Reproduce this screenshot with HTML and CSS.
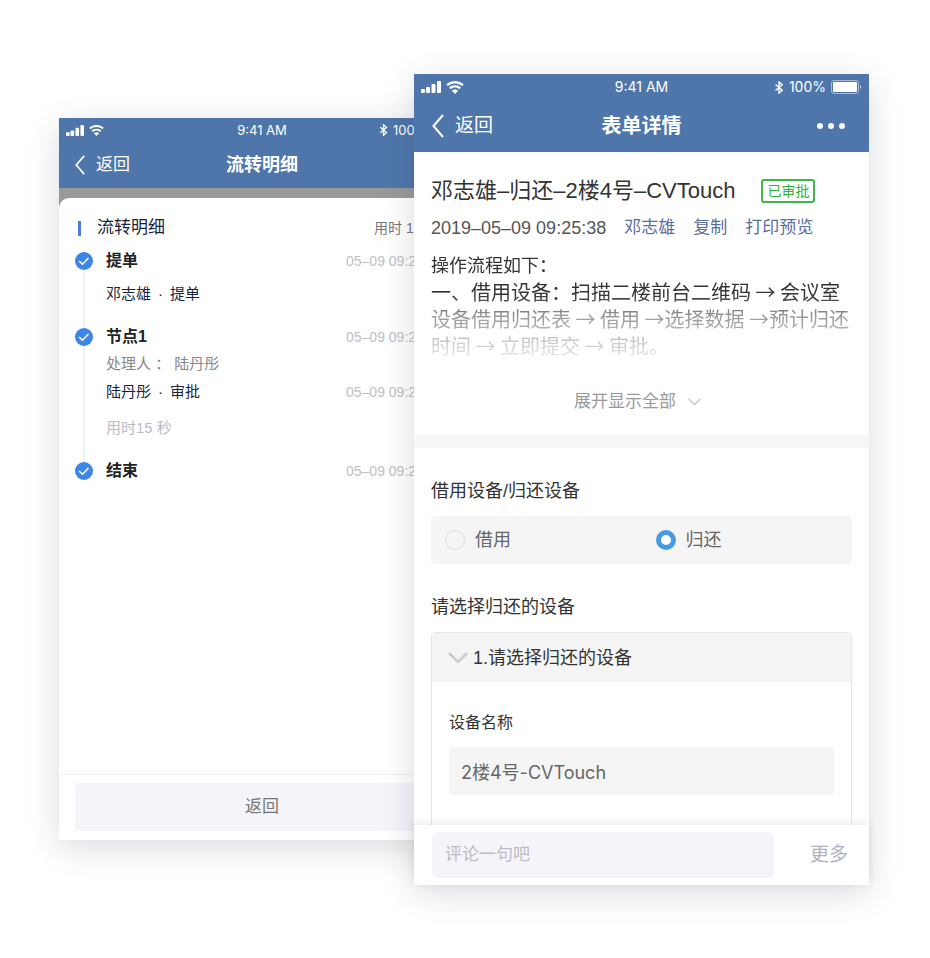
FILE: index.html
```html
<!DOCTYPE html>
<html lang="zh-CN">
<head>
  <meta charset="UTF-8" />
  <meta name="viewport" content="width=device-width, initial-scale=1.0"/>
  <title>表单详情</title>
  <link rel="stylesheet" href="styles.css">
</head>
<body>
  <!-- shared icons -->
  <svg class="sprite" width="0" height="0" aria-hidden="true">
    <symbol id="icon-signal" viewBox="0 0 20 12">
      <rect x="0" y="8" width="4" height="4" rx="1"/>
      <rect x="5" y="6" width="4" height="6" rx="1"/>
      <rect x="10.500" y="3" width="4" height="9" rx="1"/>
      <rect x="16" y="0" width="4" height="12" rx="1"/>
    </symbol>
    <symbol id="icon-wifi" viewBox="0 0 16 12">
      <path d="M8 0C4.900 0 2.100 1.200 0 3.100l1.500 1.600C3.200 3.100 5.500 2.200 8 2.200s4.800.9 6.500 2.500L16 3.100C13.900 1.200 11.100 0 8 0z"/>
      <path d="M8 4C5.900 4 4 4.800 2.600 6.100l1.500 1.600C5.100 6.700 6.500 6.100 8 6.100s2.900.6 3.900 1.600l1.500-1.600C12 4.800 10.100 4 8 4z"/>
      <path d="M8 7.900c-1.100 0-2.100.4-2.800 1.100L8 12l2.800-3c-.7-.7-1.700-1.100-2.800-1.100z"/>
    </symbol>
    <symbol id="icon-bluetooth" viewBox="0 0 8 12">
      <path d="M.8 3.300L7 8.500 4 11.200V.8l3 2.700L.8 8.700" fill="none" stroke="currentColor" stroke-width="1.300"/>
    </symbol>
    <symbol id="icon-battery" viewBox="0 0 31 14">
      <rect x=".5" y=".5" width="27" height="13" rx="2.500" fill="none" stroke="currentColor" opacity=".5"/>
      <rect x="2" y="2" width="24" height="10" rx="1"/>
      <path d="M29 5c1.500.3 1.500 3.700 0 4z" opacity=".6"/>
    </symbol>
    <symbol id="icon-back" viewBox="0 0 12 24">
      <path d="M11 1L1.500 12 11 23" fill="none" stroke="currentColor" stroke-width="2"/>
    </symbol>
    <symbol id="icon-check" viewBox="0 0 18 18">
      <circle cx="9" cy="9" r="9" fill="#3d85e8"/>
      <path d="M4 9l3.500 3.200L13.500 6" fill="none" stroke="#fff" stroke-width="1.600"/>
    </symbol>
    <symbol id="icon-down" viewBox="0 0 20 12">
      <path d="M1 1l9 9 9-9" fill="none" stroke="currentColor" stroke-width="2.500"/>
    </symbol>
  </svg>

  <div class="stage">
    <!-- flow detail -->
    <section class="phone phone-flow">
      <header class="top">
        <div class="status">
          <span class="status-left">
            <svg class="signal"><use href="#icon-signal"/></svg>
            <svg class="wifi"><use href="#icon-wifi"/></svg>
          </span>
          <span>9:41 AM</span>
          <span class="status-right">
            <svg class="bluetooth"><use href="#icon-bluetooth"/></svg>
            <span class="level">100</span>
          </span>
        </div>
        <nav class="nav">
          <button class="back"><svg><use href="#icon-back"/></svg>返回</button>
          <h1>流转明细</h1>
        </nav>
      </header>

      <div class="mask">
        <div class="sheet">
          <div class="sheet-head">
            <h2>流转明细</h2>
            <span class="total">用时 1</span>
          </div>
          <ol class="timeline">
            <li>
              <div class="rail"><svg><use href="#icon-check"/></svg></div>
              <div class="step">
                <div class="row step-head"><h3>提单</h3><time>05–09 09:2</time></div>
                <div class="row first"><span>邓志雄<i>·</i>提单</span></div>
              </div>
            </li>
            <li>
              <div class="rail"><svg><use href="#icon-check"/></svg></div>
              <div class="step">
                <div class="row step-head"><h3>节点1</h3><time>05–09 09:2</time></div>
                <div class="row handler">处理人 ： 陆丹彤</div>
                <div class="row"><span>陆丹彤<i>·</i>审批</span><time>05–09 09:2</time></div>
                <div class="row cost">用时15 秒</div>
              </div>
            </li>
            <li>
              <div class="rail"><svg><use href="#icon-check"/></svg></div>
              <div class="step">
                <div class="row step-head"><h3>结束</h3><time>05–09 09:2</time></div>
              </div>
            </li>
          </ol>
          <footer class="sheet-foot">
            <button>返回</button>
          </footer>
        </div>
      </div>
    </section>

    <!-- form detail -->
    <section class="phone phone-form">
      <header class="top">
        <div class="status">
          <span class="status-left">
            <svg class="signal"><use href="#icon-signal"/></svg>
            <svg class="wifi"><use href="#icon-wifi"/></svg>
          </span>
          <span>9:41 AM</span>
          <span class="status-right">
            <svg class="bluetooth"><use href="#icon-bluetooth"/></svg>
            100%
            <svg class="battery"><use href="#icon-battery"/></svg>
          </span>
        </div>
        <nav class="nav">
          <button class="back"><svg><use href="#icon-back"/></svg>返回</button>
          <h1>表单详情</h1>
          <button class="menu" aria-label="菜单">
            <svg width="28" height="8" viewBox="0 0 28 8">
              <circle cx="3" cy="4" r="3"/><circle cx="14" cy="4" r="3"/><circle cx="25" cy="4" r="3"/>
            </svg>
          </button>
        </nav>
      </header>

      <div class="intro">
        <div class="title">
          <h2>邓志雄–归还–2楼4号–CVTouch</h2>
          <span class="tag">已审批</span>
        </div>
        <div class="meta">
          <time>2019–05–09 09:25:38</time>
          <a href="#">邓志雄</a>
          <a href="#">复制</a>
          <a href="#">打印预览</a>
        </div>
        <div class="desc">
          <p class="lead">操作流程如下：</p>
          <p>一、借用设备：扫描二楼前台二维码 → 会议室设备借用归还表 → 借用 →选择数据 →预计归还时间 → 立即提交 → 审批。</p>
        </div>
        <button class="expand">展开显示全部<svg><use href="#icon-down"/></svg></button>
      </div>

      <form class="form">
        <fieldset>
          <legend>借用设备/归还设备</legend>
          <div class="radios">
            <label><input type="radio" name="action">借用</label>
            <label><input type="radio" name="action" checked>归还</label>
          </div>
        </fieldset>
        <h3>请选择归还的设备</h3>
        <div class="card">
          <div class="card-head"><svg><use href="#icon-down"/></svg>1.请选择归还的设备</div>
          <div class="card-body">
            <label for="device">设备名称</label>
            <input id="device" type="text" value="2楼4号-CVTouch">
          </div>
        </div>
      </form>

      <footer class="comment">
        <input type="text" placeholder="评论一句吧" aria-label="评论">
        <button>更多</button>
      </footer>
    </section>
  </div>
</body>
</html>
```
FILE: styles.css
```css
* { box-sizing: border-box; }

body {
  margin: 0;
  background: #fff;
  color: #333;
  font-family: 'Liberation Sans', 'Noto Sans CJK SC', sans-serif;
  line-height: 24px;
}

h1, h2, h3, p, ol, fieldset, legend {
  margin: 0;
  padding: 0;
  border: none;
  font-weight: normal;
}

button, input {
  font-family: inherit;
  line-height: inherit;
  border: none;
  outline: none;
}

button {
  padding: 0;
  background: none;
  cursor: pointer;
}

a { text-decoration: none; }

svg {
  fill: currentColor;
  flex: none;
}

.sprite { position: absolute; }

.stage {
  display: flex;
  align-items: flex-start;
  padding: 74px 61px 74px 59px;
}

.phone {
  display: flex;
  flex-direction: column;
  min-width: 0;
  background: #fff;
  box-shadow: 0 8px 32px rgba(40, 40, 60, 0.16);
}

.phone-flow {
  flex: 406 1 0;
  min-height: 722px;
  margin-top: 44px;
}

.phone-form {
  flex: 455 1 0;
  margin-left: -51px;
  z-index: 1;
}

/* top bar */
.top {
  background: #4f76aa;
  color: #fff;
}

.status {
  display: grid;
  grid-template-columns: 1fr auto 1fr;
  align-items: center;
  height: 26px;
  padding: 0 7px;
  font-family: Inter, sans-serif;
  font-size: 14px;
}

.status-left, .status-right {
  display: flex;
  align-items: center;
  gap: 5px;
}

.status-right { justify-content: flex-end; }

.signal { width: 20px; height: 12px; }
.wifi { width: 18px; height: 13px; }
.bluetooth { width: 10px; height: 13px; }
.battery { width: 31px; height: 14px; }

.nav {
  display: grid;
  grid-template-columns: 1fr auto 1fr;
  align-items: center;
  height: 52px;
  padding: 0 18px;
}

.nav h1 {
  font-size: 20px;
  font-weight: bold;
}

.back {
  display: flex;
  align-items: center;
  gap: 11px;
  color: #fff;
  font-size: 19px;
}

.back svg { width: 12px; height: 24px; }

.menu {
  justify-self: end;
  margin-right: 6px;
  color: #fff;
}

.menu svg { display: block; }

.phone-flow .status {
  height: 23px;
  font-size: 13px;
}

.phone-flow .signal { width: 18px; height: 11px; }
.phone-flow .wifi { width: 15px; height: 11px; }
.phone-flow .bluetooth { width: 9px; height: 12px; }
.phone-flow .level { width: 65px; }

.phone-flow .nav {
  height: 47px;
  padding: 0 16px;
}

.phone-flow .nav h1 { font-size: 18px; }
.phone-flow .back { font-size: 17px; }
.phone-flow .back svg { width: 10px; height: 20px; }

/* flow sheet */
.mask {
  flex: 1;
  display: flex;
  padding-top: 10px;
  background: linear-gradient(#999 40px, #fff 40px);
}

.sheet {
  flex: 1;
  display: flex;
  flex-direction: column;
  background: #fff;
  border-radius: 10px 10px 0 0;
}

.sheet-head {
  display: flex;
  align-items: center;
  justify-content: space-between;
  padding: 18px 16px 0 19px;
  color: #777;
}

.sheet-head h2 {
  display: flex;
  align-items: center;
  gap: 16px;
  color: #1b1f3b;
  font-size: 17px;
}

.sheet-head h2::before {
  content: '';
  width: 3px;
  height: 15px;
  background: #4a7be0;
}

.total {
  width: 75px;
  font-size: 14px;
}

.timeline {
  flex: 1;
  padding: 12px 16px 0;
  list-style: none;
}

.timeline li {
  display: flex;
  gap: 13px;
}

.rail {
  display: flex;
  flex-direction: column;
  align-items: center;
}

.rail svg { width: 18px; height: 18px; }

.rail::after {
  content: '';
  flex: 1;
  width: 2px;
  background: #edf1fd;
}

.timeline li:last-child .rail::after { display: none; }

.step {
  flex: 1;
  padding-bottom: 20px;
}

.row {
  display: flex;
  align-items: center;
  justify-content: space-between;
  height: 28px;
  color: #1b1f3b;
  font-size: 15px;
}

.row i {
  margin: 0 7px;
  font-style: normal;
}

.row time {
  width: 103px;
  color: #c0c0c5;
  font-size: 14px;
}

.step-head {
  height: 18px;
  margin-bottom: 4px;
}

.step h3 {
  color: #222;
  font-size: 16px;
  font-weight: bold;
}

.row.first { margin-top: 10px; }
.row.handler { color: #888; }

.row.cost {
  margin-top: 8px;
  color: #b9bac8;
}

.sheet-foot {
  padding: 8px 16px 9px;
  border-top: 1px solid #f0f0f2;
}

.sheet-foot button {
  width: 100%;
  height: 48px;
  border-radius: 4px;
  background: #f4f5f9;
  color: #777;
  font-size: 17px;
}

/* form intro */
.intro {
  padding: 23px 17px 21px;
  border-bottom: 13px solid #f7f7fa;
}

.title {
  display: flex;
  align-items: center;
  gap: 26px;
}

.title h2 {
  font-size: 22px;
  line-height: 32px;
  white-space: nowrap;
}

.tag {
  padding: 0 4px;
  border: 2px solid #3fb54a;
  border-radius: 3px;
  color: #2fb13a;
  font-size: 14px;
  line-height: 20px;
  white-space: nowrap;
}

.meta {
  display: flex;
  align-items: center;
  gap: 18px;
  height: 26px;
  margin-top: 8px;
  font-size: 17px;
  white-space: nowrap;
}

.meta time {
  color: #555;
  font-size: 18px;
}

.meta a { color: #5b6d9d; }

.desc {
  margin-top: 10px;
  font-family: 'Noto Sans CJK SC', sans-serif;
  font-size: 20px;
  line-height: 27px;
  -webkit-mask-image: linear-gradient(#000 40%, rgba(0, 0, 0, 0.5) 60%, rgba(0, 0, 0, 0.1));
  mask-image: linear-gradient(#000 40%, rgba(0, 0, 0, 0.5) 60%, rgba(0, 0, 0, 0.1));
}

.desc .lead { font-size: 18px; }

.expand {
  display: flex;
  align-items: center;
  gap: 12px;
  height: 24px;
  margin: 31px auto 0;
  padding-right: 8px;
  color: #999;
  font-size: 17px;
}

.expand svg {
  width: 13px;
  height: 8px;
  color: #ccc;
}

/* form */
.form {
  padding: 30px 17px 0;
  font-size: 18px;
}

.form legend, .form h3 {
  font-size: 18px;
  line-height: 26px;
}

.form h3 { margin-top: 30px; }

.radios {
  display: grid;
  grid-template-columns: 1fr 1fr;
  height: 48px;
  margin-top: 12px;
  border-radius: 4px;
  background: #f5f5f5;
  color: #666;
}

.radios label {
  display: flex;
  align-items: center;
  gap: 10px;
  padding-left: 14px;
}

.radios input {
  appearance: none;
  width: 20px;
  height: 20px;
  margin: 0;
  border: 1px solid #ddd;
  border-radius: 50%;
}

.radios input:checked {
  border: 5px solid #4a99e3;
  background: #fff;
}

.card {
  margin-top: 12px;
  border: 1px solid #e6e6e8;
  border-bottom: none;
  border-radius: 5px 5px 0 0;
}

.card-head {
  display: flex;
  align-items: center;
  gap: 5px;
  height: 49px;
  padding-left: 16px;
  background: #f5f5f5;
}

.card-head svg {
  width: 20px;
  height: 12px;
  color: #ccc;
}

.card-body {
  padding: 30px 17px 30px;
}

.card-body label {
  display: block;
  font-size: 16px;
  line-height: 22px;
}

.card-body input {
  display: block;
  width: 100%;
  height: 48px;
  margin-top: 13px;
  padding: 0 12px;
  border-radius: 4px;
  background: #f5f5f5;
  color: #666;
  font-family: Inter, 'Noto Sans CJK SC', sans-serif;
  font-size: 18px;
}

.comment {
  display: flex;
  align-items: center;
  gap: 36px;
  height: 60px;
  padding: 0 21px 0 18px;
  background: #fff;
  box-shadow: 0 -2px 8px rgba(40, 40, 60, 0.1);
}

.comment input {
  flex: 1;
  min-width: 0;
  height: 46px;
  padding: 0 13px;
  border-radius: 6px;
  background: #f5f5f9;
  font-size: 17px;
}

.comment input::placeholder { color: #bbbcc4; }

.comment button {
  color: #b0b1c0;
  font-size: 19px;
}
```
